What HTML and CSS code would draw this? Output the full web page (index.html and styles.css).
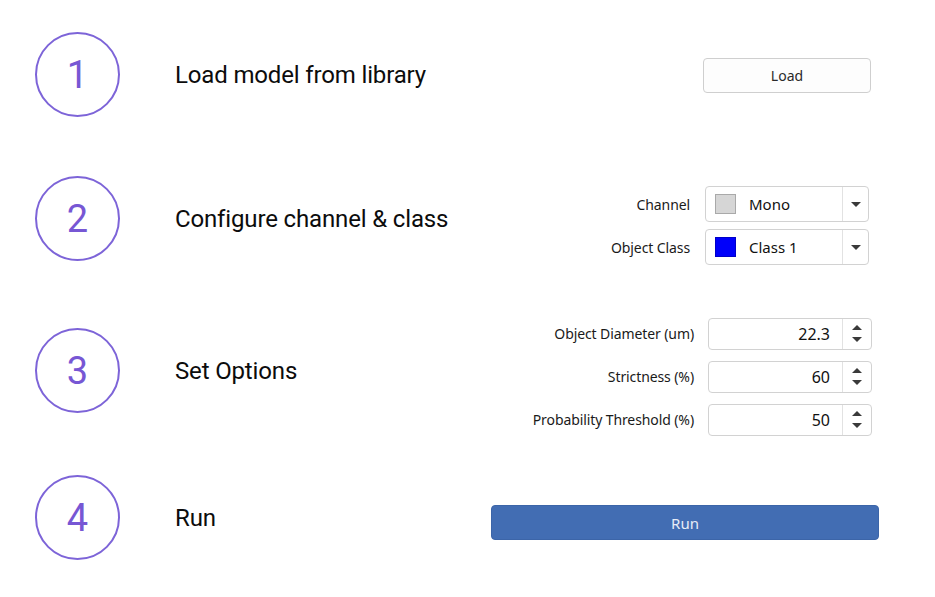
FILE: index.html
```html
<!DOCTYPE html>
<html lang="en">
<head>
    <meta charset="UTF-8">
    <meta name="viewport" content="width=device-width, initial-scale=1.0">
    <title>Segmentation steps</title>
    <link rel="stylesheet" href="styles.css">
</head>
<body>
    <main class="steps">
        <section class="step step-load">
            <div class="step-num">1</div>
            <div class="step-title">Load model from library</div>
            <div class="step-controls">
                <button class="btn btn-load">Load</button>
            </div>
        </section>

        <section class="step step-config">
            <div class="step-num">2</div>
            <div class="step-title">Configure channel &amp; class</div>
            <div class="step-controls form-grid combo-grid">
                <label class="field-label">Channel</label>
                <div class="combo">
                    <span class="swatch swatch-mono"></span>
                    <span class="combo-text">Mono</span>
                    <span class="combo-arrow"><span class="tri-down"></span></span>
                </div>
                <label class="field-label">Object Class</label>
                <div class="combo">
                    <span class="swatch swatch-blue"></span>
                    <span class="combo-text">Class 1</span>
                    <span class="combo-arrow"><span class="tri-down"></span></span>
                </div>
            </div>
        </section>

        <section class="step step-options">
            <div class="step-num">3</div>
            <div class="step-title">Set Options</div>
            <div class="step-controls form-grid spin-grid">
                <label class="field-label">Object Diameter (um)</label>
                <div class="spin">
                    <span class="spin-value">22.3</span>
                    <span class="spin-buttons"><span class="tri-up"></span><span class="tri-down"></span></span>
                </div>
                <label class="field-label">Strictness (%)</label>
                <div class="spin">
                    <span class="spin-value">60</span>
                    <span class="spin-buttons"><span class="tri-up"></span><span class="tri-down"></span></span>
                </div>
                <label class="field-label">Probability Threshold (%)</label>
                <div class="spin">
                    <span class="spin-value">50</span>
                    <span class="spin-buttons"><span class="tri-up"></span><span class="tri-down"></span></span>
                </div>
            </div>
        </section>

        <section class="step step-run">
            <div class="step-num">4</div>
            <div class="step-title">Run</div>
            <div class="step-controls">
                <button class="btn btn-run">Run</button>
            </div>
        </section>
    </main>
</body>
</html>
```

FILE: styles.css
```css
body { margin: 0; background: #fff; font-family: Roboto, "Liberation Sans", sans-serif; color: #111; }
.steps { padding: 32px 64px 0 35px; display: flex; flex-direction: column; }

.step { display: flex; align-items: center; height: 85px; }
.step-config { margin-top: 59px; }
.step-options { margin-top: 67px; }
.step-run { margin-top: 62px; }

.step-num { width: 85px; height: 85px; box-sizing: border-box; border: 2px solid #7d64d8; border-radius: 50%; display: flex; align-items: center; justify-content: center; font-size: 38px; color: #7757d4; flex-shrink: 0; }
.step-title { margin-left: 55px; font-size: 24px; letter-spacing: -0.15px; color: #0c0c0c; }
.step-controls { margin-left: auto; }

.step-load .step-controls { margin-top: 2px; }
.step-config .step-controls { margin-top: 14px; margin-right: 2px; }
.step-options .step-controls { margin-top: 12px; margin-right: -1px; }
.step-run .step-controls { margin-top: 10px; margin-right: -8px; }

.btn { font-family: "Noto Sans", "Open Sans", sans-serif; font-size: 14px; box-sizing: border-box; border-radius: 4px; cursor: pointer; }
.btn-load { width: 168px; height: 35px; background: #fdfdfd; border: 1px solid #cfcfcf; color: #2a2a2a; }
.btn-run { width: 388px; height: 35px; background: #426db3; border: 1px solid #3c65a8; color: #e6ecf7; font-size: 15px; }

.form-grid { display: grid; grid-template-columns: auto 164px; align-items: center; font-family: "Noto Sans", "Open Sans", sans-serif; }
.combo-grid { column-gap: 15px; row-gap: 7px; }
.spin-grid { column-gap: 14px; row-gap: 11px; }
.field-label { font-size: 14px; color: #1a1a1a; text-align: right; letter-spacing: -0.1px; }

.combo { height: 36px; box-sizing: border-box; border: 1px solid #d2d2d2; border-radius: 4px; background: #fff; display: flex; align-items: center; font-size: 15px; color: #111; }
.swatch { width: 21px; height: 20px; box-sizing: border-box; margin-left: 9px; flex-shrink: 0; }
.swatch-mono { background: #d6d6d6; border: 1px solid #a9a9a9; }
.swatch-blue { background: #0000fa; border: 1px solid #0000c8; }
.combo-text { margin-left: 13px; flex: 1; }
.combo-arrow { width: 25px; align-self: stretch; border-left: 1px solid #e2e2e2; display: flex; align-items: center; justify-content: center; }

.spin { height: 32px; box-sizing: border-box; border: 1px solid #d2d2d2; border-radius: 4px; background: #fff; display: flex; align-items: stretch; font-size: 16px; color: #111; }
.spin-value { flex: 1; text-align: right; padding-right: 12px; line-height: 30px; }
.spin-buttons { width: 28px; border-left: 1px solid #e2e2e2; display: flex; flex-direction: column; align-items: center; justify-content: center; gap: 7px; }

.tri-down { width: 0; height: 0; border-left: 5px solid transparent; border-right: 5px solid transparent; border-top: 5px solid #3a3a3a; }
.tri-up { width: 0; height: 0; border-left: 5px solid transparent; border-right: 5px solid transparent; border-bottom: 5px solid #3a3a3a; }
```
